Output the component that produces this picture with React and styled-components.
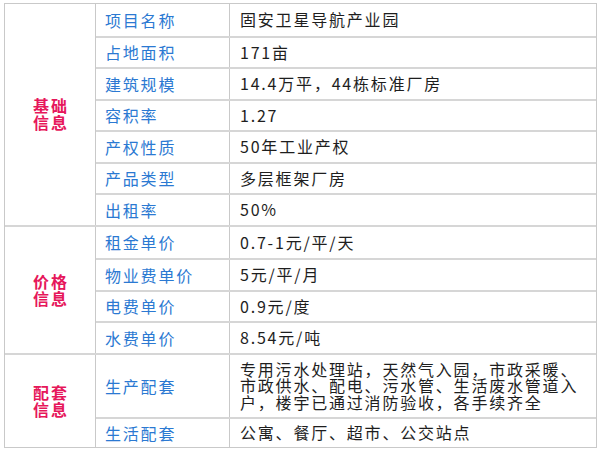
import React from "react";
import styled, { createGlobalStyle } from "styled-components";

const Global = createGlobalStyle`
  *, *::before, *::after { box-sizing: border-box; }
  html, body { margin: 0; padding: 0; background: #fff; }
  body { font-family: "Noto Sans CJK SC", "Microsoft YaHei", sans-serif; }
`;

const Page = styled.div`
  padding: 3px 0 0 4px;
  width: 597px;
`;

const Table = styled.div`
  border: 1px solid #c9c9c9;
  display: flex;
  flex-direction: column;
`;

const Section = styled.div`
  display: flex;
  & + & { border-top: 2px solid #d6d6d6; }
`;

const Category = styled.div`
  width: 91px;
  flex: none;
  border-right: 1px solid #c9c9c9;
  display: flex;
  align-items: center;
  justify-content: center;
  text-align: center;
  color: #e6175b;
  font-weight: 700;
  font-size: 16px;
  letter-spacing: 2px;
  line-height: 17px;
  padding-left: 2px;
`;

const Rows = styled.div`
  flex: 1;
  display: flex;
  flex-direction: column;
`;

const Row = styled.div`
  display: grid;
  grid-template-columns: 134px 1fr;
  height: ${(p) => p.$h || 31.5}px;
  & + & { border-top: 2px solid #d6d6d6; }
`;

const Label = styled.div`
  border-right: 1px solid #c9c9c9;
  display: flex;
  align-items: center;
  padding-left: 9px;
  color: #2b79d2;
  font-size: 16px;
  letter-spacing: 1.8px;
  line-height: 18px;
  white-space: nowrap;
`;

const Value = styled.div`
  display: flex;
  align-items: center;
  padding-left: 10px;
  color: #1e1e1e;
  font-size: 16px;
  letter-spacing: 1.8px;
  line-height: 16.7px;
  white-space: nowrap;
`;

const data = [
  {
    cat: ["基础", "信息"],
    rows: [
      ["项目名称", "固安卫星导航产业园"],
      ["占地面积", "171亩"],
      ["建筑规模", "14.4万平，44栋标准厂房"],
      ["容积率", "1.27"],
      ["产权性质", "50年工业产权"],
      ["产品类型", "多层框架厂房"],
      ["出租率", "50%"],
    ],
  },
  {
    cat: ["价格", "信息"],
    rows: [
      ["租金单价", "0.7-1元/平/天"],
      ["物业费单价", "5元/平/月"],
      ["电费单价", "0.9元/度"],
      ["水费单价", "8.54元/吨"],
    ],
  },
  {
    cat: ["配套", "信息"],
    rows: [
      [
        "生产配套",
        [
          "专用污水处理站，天然气入园，市政采暖、",
          "市政供水、配电、污水管、生活废水管道入",
          "户，楼宇已通过消防验收，各手续齐全",
        ],
        62.5,
      ],
      ["生活配套", "公寓、餐厅、超市、公交站点", 29.5],
    ],
  },
];

export default function App() {
  return (
    <Page>
      <Global />
      <Table>
        {data.map((s, i) => (
          <Section key={i}>
            <Category>
              {s.cat[0]}
              <br />
              {s.cat[1]}
            </Category>
            <Rows>
              {s.rows.map(([l, v, h], j) => (
                <Row key={j} $h={h}>
                  <Label>{l}</Label>
                  <Value>
                    {Array.isArray(v) ? (
                      <div>
                        {v.map((line, k) => (
                          <React.Fragment key={k}>
                            {line}
                            {k < v.length - 1 && <br />}
                          </React.Fragment>
                        ))}
                      </div>
                    ) : (
                      v
                    )}
                  </Value>
                </Row>
              ))}
            </Rows>
          </Section>
        ))}
      </Table>
    </Page>
  );
}
